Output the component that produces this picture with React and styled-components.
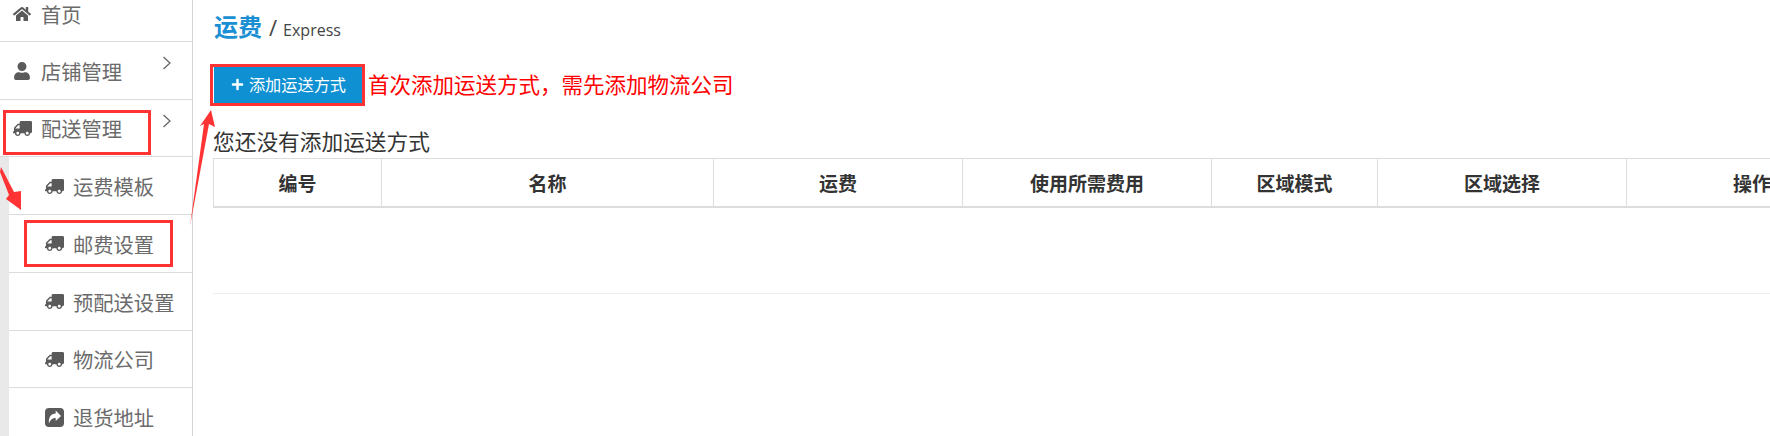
import React from "react";
import styled, { createGlobalStyle } from "styled-components";
import { FaHome, FaUser, FaTruck, FaPlus } from "react-icons/fa";

const Global = createGlobalStyle`
  html, body { margin: 0; padding: 0; width: 1770px; height: 436px; overflow: hidden; background: #fff; }
  body { font-family: "Open Sans", "Noto Sans CJK SC", sans-serif; }
`;

const Page = styled.div`
  position: relative;
  display: flex;
  width: 1770px;
  height: 436px;
  overflow: hidden;
`;

const Sidebar = styled.nav`
  flex: 0 0 193px;
  height: 460px;
  margin-top: -16px;
  box-sizing: border-box;
  border-right: 1.5px solid #d4d4d4;
  font-family: "Noto Sans CJK SC", sans-serif;
`;

const SubList = styled.div`
  background: #fff;
  border-left: 9px solid #e9e9e9;
`;

const Row = styled.div`
  box-sizing: border-box;
  height: 57.75px;
  display: flex;
  align-items: center;
  position: relative;
  padding-left: ${(p) => (p.$sub ? "36px" : "13px")};
  padding-top: ${(p) => (p.$lead ? "3px" : "1px")};
  border-bottom: 1.5px solid #dcdcdc;
  color: #6b6b6b;
  font-size: 20.3px;
`;

const IconSlot = styled.span`
  width: 28px;
  flex: none;
  display: flex;
  align-items: center;
  color: #5a5a5a;
  font-size: 18px;
`;

const FlippedTruck = styled(FaTruck)`
  transform: scaleX(-1);
  font-size: 19px;
`;

const Chevron = styled.svg`
  position: absolute;
  left: 162px;
  top: 13px;
  width: 10px;
  height: 16px;
`;

const Main = styled.main`
  flex: 1;
  min-width: 0;
  padding: 8px 0 0 20px;
`;

const Title = styled.div`
  display: flex;
  align-items: baseline;
  height: 38px;
  padding-left: 1px;
  color: #444;
`;

const TitleMain = styled.strong`
  font-family: "Noto Sans CJK SC", sans-serif;
  font-size: 24px;
  line-height: 36px;
  color: #1a8fd3;
`;

const TitleSub = styled.span`
  margin-left: 7px;
  font-size: 16px;
  color: #444;
  & > i { font-style: normal; font-size: 22px; margin-right: 6px; }
`;

const ActionRow = styled.div`
  display: flex;
  align-items: center;
  margin-top: 21px;
  margin-left: 1px;
`;

const AddButton = styled.button`
  box-sizing: border-box;
  width: 150px;
  height: 36px;
  border: 0;
  padding: 0 1px 2px 0;
  background: #0e90d2;
  color: #fff;
  font-family: "Noto Sans CJK SC", sans-serif;
  font-size: 16.2px;
  display: flex;
  align-items: center;
  justify-content: center;
  gap: 5px;
`;

const Notice = styled.span`
  margin-left: 4px;
  margin-top: -4px;
  color: #ff0000;
  font-family: "Noto Sans CJK SC", sans-serif;
  font-size: 21.5px;
  white-space: nowrap;
`;

const EmptyText = styled.div`
  margin-top: 22px;
  height: 33px;
  line-height: 32px;
  font-family: "Noto Sans CJK SC", sans-serif;
  font-size: 21.7px;
  color: #333;
  white-space: nowrap;
`;

const Table = styled.div`
  width: 1664px;
`;

const HeadRow = styled.div`
  display: grid;
  grid-template-columns: 168px 332px 249px 249px 166px 249px 251px;
  height: 50px;
  box-sizing: border-box;
  border-top: 1.5px solid #ddd;
  border-left: 1.5px solid #ddd;
  border-bottom: 2px solid #ddd;
`;

const HeadCell = styled.div`
  display: flex;
  align-items: center;
  justify-content: center;
  padding-bottom: 1px;
  border-right: 1px solid #ddd;
  font-family: "Noto Sans CJK SC", sans-serif;
  font-weight: 700;
  font-size: 19px;
  color: #333;
  white-space: nowrap;
`;

const EmptyRow = styled.div`
  height: 86px;
  box-sizing: border-box;
  border-bottom: 1px solid #eee;
`;

const MarkBox = styled.div`
  position: absolute;
  box-sizing: border-box;
  border: 3px solid #ff3333;
  left: ${(p) => p.$x}px;
  top: ${(p) => p.$y}px;
  width: ${(p) => p.$w}px;
  height: ${(p) => p.$h}px;
`;

const ArrowLayer = styled.svg`
  position: absolute;
  left: 0;
  top: 0;
  pointer-events: none;
`;

const ShareIcon = () => (
  <svg width="19" height="19" viewBox="0 0 19 19">
    <rect x="0" y="0" width="19" height="19" rx="4" fill="#5a5a5a" />
    <path d="M10.7 2.5 L16 8 L10.7 13 V10 C7.5 10 5.5 11.5 4 15.5 C3.2 9.5 6 5.6 10.7 5.5 Z" fill="#fff" />
  </svg>
);

const ChevronIcon = () => (
  <Chevron viewBox="0 0 10 16">
    <path d="M1.5 2 L8 8 L1.5 14" fill="none" stroke="#666" strokeWidth="1.3" />
  </Chevron>
);

const subs = [
  ["运费模板", <FlippedTruck />],
  ["邮费设置", <FlippedTruck />],
  ["预配送设置", <FlippedTruck />],
  ["物流公司", <FlippedTruck />],
  ["退货地址", <ShareIcon />],
];

const cols = ["编号", "名称", "运费", "使用所需费用", "区域模式", "区域选择", "操作"];

export default function App() {
  return (
    <Page>
      <Global />
      <Sidebar>
        <Row $lead><IconSlot><FaHome /></IconSlot>首页</Row>
        <Row><IconSlot><FaUser /></IconSlot>店铺管理<ChevronIcon /></Row>
        <Row><IconSlot><FlippedTruck /></IconSlot>配送管理<ChevronIcon /></Row>
        <SubList>
          {subs.map(([label, icon]) => (
            <Row $sub key={label}><IconSlot>{icon}</IconSlot>{label}</Row>
          ))}
        </SubList>
      </Sidebar>
      <Main>
        <Title>
          <TitleMain>运费</TitleMain>
          <TitleSub><i>/</i>Express</TitleSub>
        </Title>
        <ActionRow>
          <AddButton><FaPlus size={13} />添加运送方式</AddButton>
          <Notice>首次添加运送方式，需先添加物流公司</Notice>
        </ActionRow>
        <EmptyText>您还没有添加运送方式</EmptyText>
        <Table>
          <HeadRow>
            {cols.map((c) => <HeadCell key={c}>{c}</HeadCell>)}
          </HeadRow>
          <EmptyRow />
        </Table>
      </Main>
      <MarkBox $x={3} $y={110} $w={148} $h={45} />
      <MarkBox $x={24} $y={220} $w={149} $h={47} />
      <MarkBox $x={210} $y={64} $w={155} $h={42} />
      <ArrowLayer width="1770" height="436">
        <polygon points="1,167 14,192 21,191 21,210 6,199 9,195 0,172" fill="#ff3333" />
        <polygon points="211,110 215,127 209,124 190,226 204,124 200,126" fill="#ff3333" />
      </ArrowLayer>
    </Page>
  );
}
